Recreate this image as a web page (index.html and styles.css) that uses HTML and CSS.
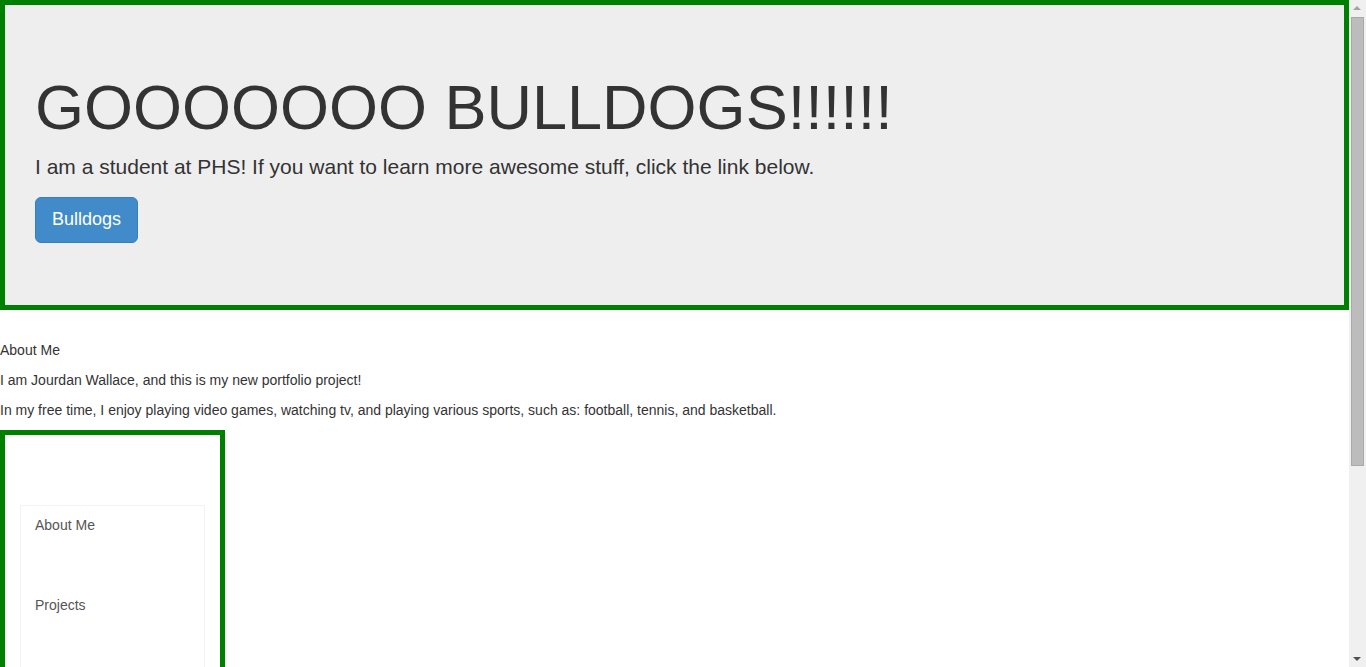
FILE: index.html
```html
<!DOCTYPE html>
<html lang="en">
<head>
<meta charset="utf-8">
<title>Bulldogs</title>
<link rel="stylesheet" href="styles.css">
</head>
<body>
  <div class="page">
    <div class="jumbotron">
      <h1 class="hero-title">GOOOOOOO BULLDOGS!!!!!!</h1>
      <p class="hero-text">I am a student at PHS! If you want to learn more awesome stuff, click the link below.</p>
      <p class="hero-action"><a class="btn-lg" href="#">Bulldogs</a></p>
    </div>

    <div class="about">
      <p>About Me</p>
      <p>I am Jourdan Wallace, and this is my new portfolio project!</p>
      <p>In my free time, I enjoy playing video games, watching tv, and playing various sports, such as: football, tennis, and basketball.</p>
    </div>

    <div class="sidebar">
      <ul class="side-nav">
        <li><a href="#">About Me</a></li>
        <li><a href="#">Projects</a></li>
      </ul>
    </div>
  </div>

  <div class="scrollbar" aria-hidden="true">
    <span class="arrow arrow-up"></span>
    <span class="thumb"></span>
    <span class="arrow arrow-down"></span>
  </div>
</body>
</html>
```

FILE: styles.css
```css
* { box-sizing: border-box; }

html, body {
  margin: 0;
  padding: 0;
}

body {
  font-family: "Liberation Sans", Arial, Helvetica, sans-serif;
  font-size: 14px;
  line-height: 1.428571;
  color: #333;
  background: #fff;
}

.page {
  margin-right: 17px;
}

.jumbotron {
  border: 5px solid #008000;
  background: #eee;
  padding: 48px 30px 47px 30px;
  margin-bottom: 30px;
}

.hero-title {
  margin: 20px 0 10px 0;
  font-size: 63px;
  font-weight: 500;
  line-height: 1.1;
  color: #333;
}

.hero-text {
  margin: 0 0 15px 0;
  font-size: 21px;
  font-weight: 200;
  line-height: 1.428571;
}

.hero-action {
  margin: 0 0 15px 0;
  display: flex;
}

.btn-lg {
  display: block;
  padding: 10px 16px;
  font-size: 18px;
  line-height: 1.33;
  color: #fff;
  background: #428bca;
  border: 1px solid #357ebd;
  border-radius: 6px;
  text-decoration: none;
}

.about {
  padding-top: 1px;
}

.about p {
  margin: 0 0 10px 0;
}

.about p:last-child {
  margin-bottom: 9px;
}

.sidebar {
  width: 225px;
  height: 511px;
  border: 5px solid #008000;
  padding: 70px 15px 0 15px;
}

.side-nav {
  list-style: none;
  margin: 0;
  padding: 0;
  height: 100%;
  border: 1px solid #f3f3f3;
  border-bottom: none;
}

.side-nav li + li {
  margin-top: 40px;
}

.side-nav a {
  display: block;
  padding: 10px 14px;
  color: #555;
  text-decoration: none;
}

/* imitation of the window's classic scrollbar */
.scrollbar {
  position: fixed;
  top: 0;
  right: 0;
  width: 17px;
  height: 100vh;
  background: #f0f0f0;
}

.thumb {
  position: absolute;
  left: 2px;
  top: 17px;
  width: 13px;
  height: 449px;
  background: #bcbcbc;
  border: 1px solid #a9a9a9;
}

.arrow {
  position: absolute;
  left: 4px;
  width: 0;
  height: 0;
  border-left: 4px solid transparent;
  border-right: 4px solid transparent;
}

.arrow-up {
  top: 6px;
  border-bottom: 4px solid #a3a3a3;
}

.arrow-down {
  bottom: 6px;
  border-top: 4px solid #505050;
}
```
